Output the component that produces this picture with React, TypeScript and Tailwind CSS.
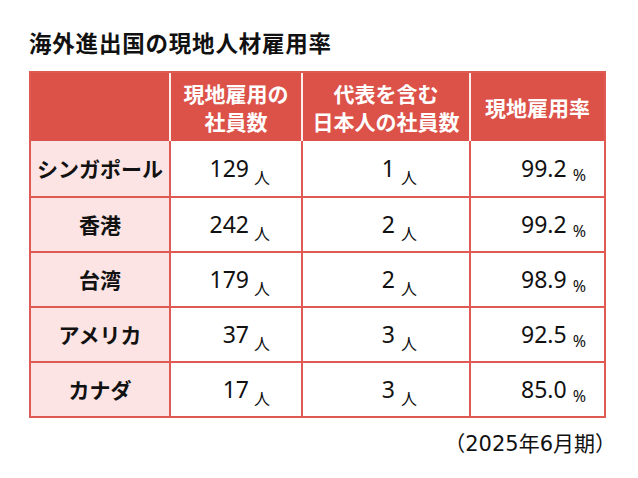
import React from "react";

const rows = [
  { name: "シンガポール", a: "129", b: "1", c: "99.2" },
  { name: "香港", a: "242", b: "2", c: "99.2" },
  { name: "台湾", a: "179", b: "2", c: "98.9" },
  { name: "アメリカ", a: "37", b: "3", c: "92.5" },
  { name: "カナダ", a: "17", b: "3", c: "85.0" },
];

const jp = { fontFamily: '"Noto Sans CJK JP", "Noto Sans", sans-serif' };
const num = { fontFamily: '"Noto Sans", "Noto Sans CJK JP", sans-serif' };
const foot = { fontFamily: '"DejaVu Sans", "Noto Sans CJK JP", sans-serif' };

export default function App() {
  return (
    <div className="w-[638px] h-[478px] bg-white text-[#111]" style={jp}>
      <div className="pl-[29px] pt-[27px] w-[606px]">
        <div className="text-[22.5px] leading-[30px] font-bold tracking-[0.8px]">海外進出国の現地人材雇用率</div>
        <div className="mt-[14px] w-[577px] border-2 border-[#de5a52]">
          <div className="grid grid-cols-[138px_132px_168px_135px] h-[68px] bg-[#dc5249] text-white text-[21px] leading-[28px] font-semibold">
            <div />
            <div className="border-l-2 border-white/90 flex flex-col items-center justify-center">
              <span>現地雇用の</span>
              <span>社員数</span>
            </div>
            <div className="border-l-2 border-white/90 flex flex-col items-center justify-center">
              <span>代表を含む</span>
              <span>日本人の社員数</span>
            </div>
            <div className="border-l-2 border-white/90 flex flex-col items-center justify-center">
              <span>現地雇用率</span>
            </div>
          </div>
          {rows.map((r, i) => (
            <div
              key={r.name}
              className={`grid grid-cols-[138px_132px_168px_135px] h-[55px] ${i === 0 ? "" : "border-t-2 border-[#de5a52]"}`}
            >
              <div className="bg-[#fbe4e3] flex items-center justify-center text-[21px] font-bold">{r.name}</div>
              <div className="border-l-2 border-[#de5a52] flex items-center justify-end pr-[31px]">
                <span className="text-[23px] leading-none" style={num}>{r.a}</span>
                <span className="text-[16px] leading-none ml-[5px] relative top-[8px]">人</span>
              </div>
              <div className="border-l-2 border-[#de5a52] flex items-center justify-end pr-[52px]">
                <span className="text-[23px] leading-none" style={num}>{r.b}</span>
                <span className="text-[16px] leading-none ml-[6px] relative top-[8px]">人</span>
              </div>
              <div className="border-l-2 border-[#de5a52] flex items-center justify-end pr-[18px]">
                <span className="text-[23px] leading-none" style={num}>{r.c}</span>
                <span className="text-[16px] leading-none ml-[6px] relative top-[6px]" style={num}>%</span>
              </div>
            </div>
          ))}
        </div>
        <div className="mt-[13px] text-right text-[21px] leading-[26px] -mr-[10px]" style={foot}>（2025年6月期）</div>
      </div>
    </div>
  );
}
